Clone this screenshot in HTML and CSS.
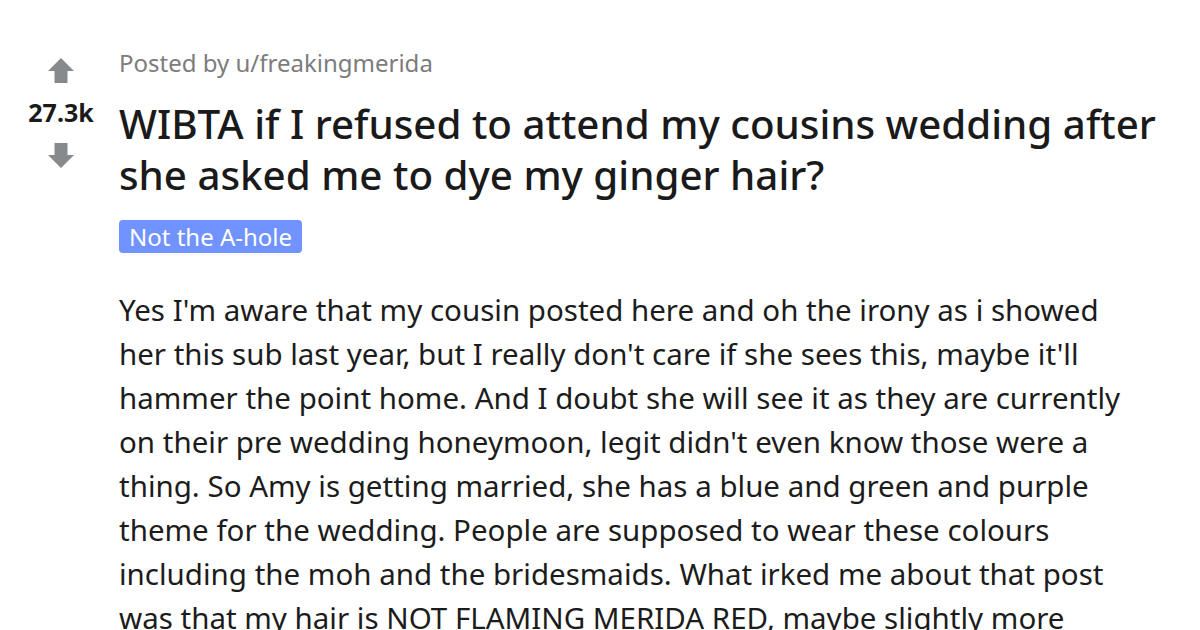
FILE: index.html
```html
<!DOCTYPE html>
<html lang="en">
<head>
  <meta charset="UTF-8">
  <meta name="viewport" content="width=device-width, initial-scale=1.0">
  <title>WIBTA if I refused to attend my cousins wedding</title>
  <link rel="stylesheet" href="styles.css">
</head>
<body>
  <div class="post">
    <div class="votes">
      <svg class="arrow" width="26" height="26" viewBox="0 0 26 26">
        <path d="M13 1 L26 14 L19.5 14 L19.5 26 L6.5 26 L6.5 14 L0 14 Z" fill="#878a8c"/>
      </svg>
      <div class="score">27.3k</div>
      <svg class="arrow" width="26" height="26" viewBox="0 0 26 26">
        <path d="M13 25 L26 12 L19.5 12 L19.5 0 L6.5 0 L6.5 12 L0 12 Z" fill="#878a8c"/>
      </svg>
    </div>

    <div class="content">
      <p class="meta">Posted by u/freakingmerida</p>
      <h1 class="title">WIBTA if I refused to attend my cousins wedding after she asked me to dye my ginger hair?</h1>
      <span class="flair">Not the A-hole</span>
      <p class="text">Yes I'm aware that my cousin posted here and oh the irony as i showed her this sub last year, but I really don't care if she sees this, maybe it'll hammer the point home. And I doubt she will see it as they are currently on their pre wedding honeymoon, legit didn't even know those were a thing. So Amy is getting married, she has a blue and green and purple theme for the wedding. People are supposed to wear these colours including the moh and the bridesmaids. What irked me about that post was that my hair is NOT FLAMING MERIDA RED, maybe slightly more auburn than she made it out to be.</p>
    </div>
  </div>
</body>
</html>
```

FILE: styles.css
```css
body {
  margin: 0;
  background: #fff;
  font-family: 'Noto Sans', 'Open Sans', sans-serif;
  overflow: hidden;
}
.post {
  display: flex;
  padding-top: 48px;
}
.votes {
  width: 122px;
  flex-shrink: 0;
  display: flex;
  flex-direction: column;
  align-items: center;
  padding-top: 9px;
}
.score {
  font-size: 25px;
  font-weight: 700;
  line-height: 30px;
  color: #1a1a1b;
  margin: 14px 0 16px;
}
.content {
  flex: 1;
  margin-left: -3px;
}
.meta {
  margin: 0;
  font-size: 24px;
  line-height: 30px;
  color: #7c7c7c;
}
.title {
  margin: 20px 0 0;
  width: 1070px;
  font-size: 40.3px;
  font-weight: 500;
  line-height: 51px;
  color: #1a1a1b;
}
.flair {
  display: inline-block;
  margin-top: 20px;
  padding: 0 10px;
  background: #7193ff;
  color: #fff;
  border-radius: 4px;
  font-size: 24px;
  line-height: 33px;
}
.text {
  margin: 35px 0 0;
  width: 1012px;
  font-size: 29.5px;
  line-height: 44px;
  color: #1c1c1c;
}
```
